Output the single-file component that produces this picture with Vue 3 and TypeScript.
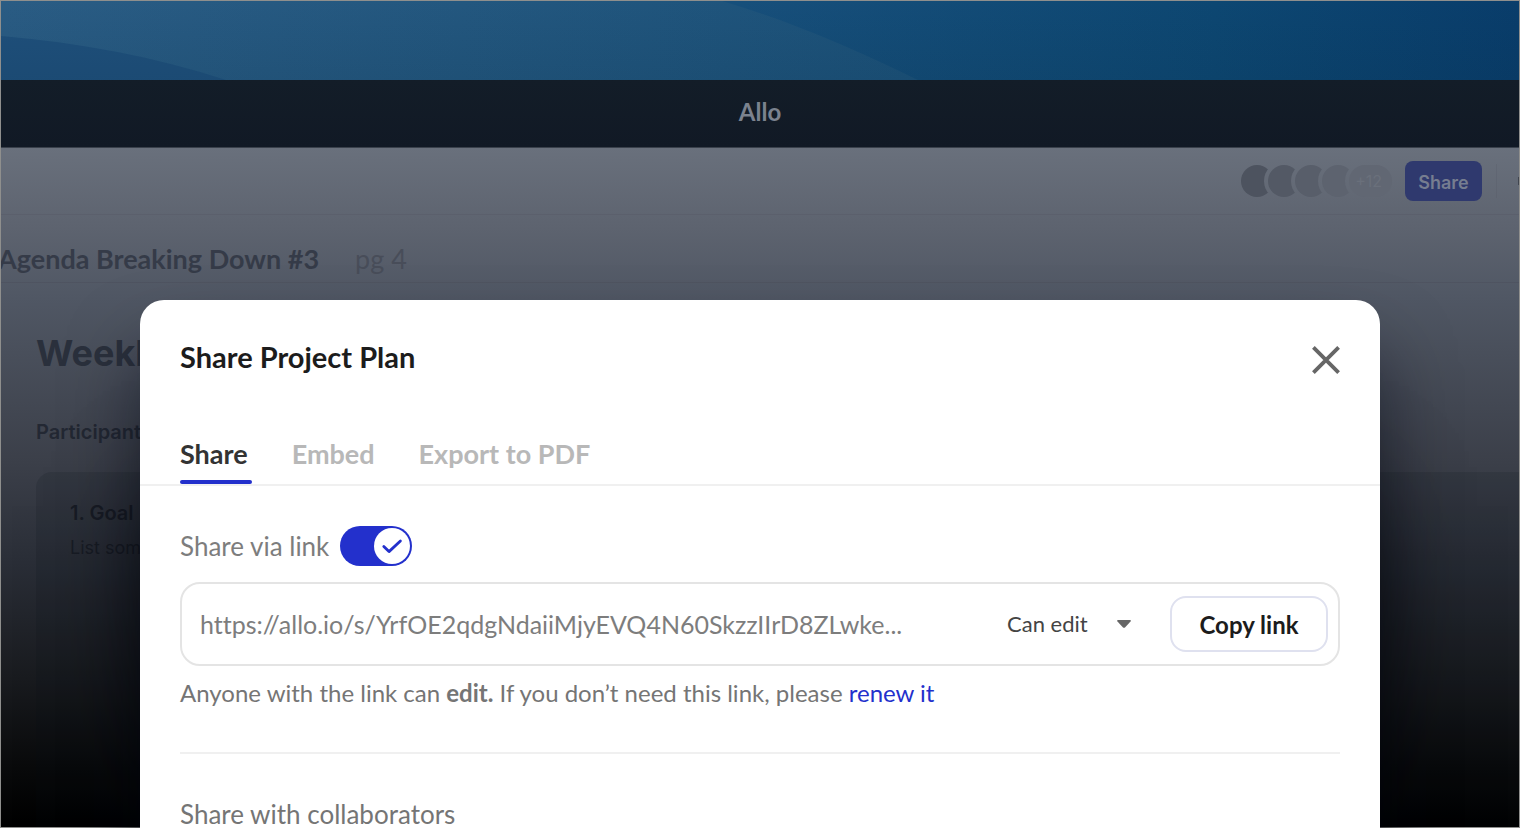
<script setup lang="ts">
import { ref } from 'vue'

const tabs: string[] = ['Share', 'Embed', 'Export to PDF']
const activeTab = ref<string>('Share')
const linkEnabled = ref<boolean>(true)
const permission = ref<string>('edit')
const link = ref<string>('https://allo.io/s/YrfOE2qdgNdaiiMjyEVQ4N60SkzzIIrD8ZLwke...')
const avatars: string[] = ['a1', 'a2', 'a3', 'a4']
</script>

<template>
  <div class="screen">
    <svg class="sky" viewBox="0 0 1520 79" preserveAspectRatio="none" aria-hidden="true">
      <defs>
        <linearGradient id="deep" x1="0" y1="0" x2="1" y2="0">
          <stop offset="0.45" stop-color="#18507c" />
          <stop offset="0.8" stop-color="#0d4772" />
          <stop offset="1" stop-color="#093d6b" />
        </linearGradient>
        <linearGradient id="wave" x1="0" y1="0" x2="1" y2="0">
          <stop offset="0" stop-color="#2a5c84" />
          <stop offset="1" stop-color="#1c527a" />
        </linearGradient>
        <linearGradient id="shade" x1="0" y1="0" x2="0" y2="1">
          <stop offset="0" stop-color="#06283f" stop-opacity="0" />
          <stop offset="1" stop-color="#06283f" stop-opacity="0.14" />
        </linearGradient>
      </defs>
      <rect width="1520" height="79" fill="url(#deep)" />
      <path d="M0 0H722C790 20 855 48 918 79H0Z" fill="url(#wave)" />
      <path d="M0 35C80 42 155 56 225 79H0Z" fill="#1f507c" />
      <rect width="1520" height="79" fill="url(#shade)" />
    </svg>

    <header class="titlebar">Allo</header>

    <div class="workspace">
      <div class="toolbar">
        <div class="avatars">
          <svg class="avatar-row" width="152" height="34" viewBox="0 0 152 34" aria-hidden="true">
            <defs>
              <mask id="bite">
                <rect width="34" height="34" fill="#fff" />
                <circle cx="43.5" cy="17" r="19.5" fill="#000" />
              </mask>
            </defs>
            <g v-for="(a, i) in avatars" :key="a" :transform="`translate(${i * 27} 0)`">
              <circle cx="17" cy="17" r="16" mask="url(#bite)" :class="a" />
            </g>
            <rect x="109" y="1" width="43" height="32" rx="16" class="a5" />
          </svg>
          <span class="more">+12</span>
        </div>
        <button type="button" class="share-button">Share</button>
        <span class="separator"></span>
        <span class="edge-dot"></span>
      </div>
      <div class="doc-bar">
        <span class="doc-title">Agenda Breaking Down #3</span>
        <span class="doc-page">pg 4</span>
      </div>
      <main class="document">
        <h1>Weekly</h1>
        <h2>Participants</h2>
        <section class="goal">
          <h3>1. Goal</h3>
          <p>List some</p>
        </section>
      </main>
    </div>

    <div class="modal" role="dialog" aria-labelledby="dialog-title">
      <div class="modal-head">
        <h2 id="dialog-title">Share Project Plan</h2>
        <button type="button" class="close" aria-label="Close">
          <svg width="28" height="28" viewBox="0 0 28 28">
            <path d="M1.4 1.4 26.6 26.6M26.6 1.4 1.4 26.6" fill="none" stroke="#666" stroke-width="3.8" />
          </svg>
        </button>
      </div>

      <nav class="tabs">
        <button
          v-for="tab in tabs"
          :key="tab"
          type="button"
          :class="['tab', { active: tab === activeTab }]"
          @click="activeTab = tab"
        >{{ tab }}</button>
      </nav>

      <div class="modal-body">
        <label class="toggle-row">
          <span>Share via link</span>
          <span class="switch">
            <input v-model="linkEnabled" type="checkbox" />
            <span class="knob">
              <svg width="36" height="36" viewBox="0 0 36 36">
                <path d="M9.8 18.4 15 23.6 26.4 13" fill="none" stroke="#2330cc" stroke-width="2.8" stroke-linecap="round" stroke-linejoin="round" />
              </svg>
            </span>
          </span>
        </label>

        <div class="link-box">
          <input v-model="link" class="link-input" type="text" readonly aria-label="Share link" />
          <div class="permission">
            <select v-model="permission" aria-label="Link permission">
              <option value="edit">Can edit</option>
            </select>
            <svg class="caret" width="14" height="8" viewBox="0 0 14 8">
              <path d="M0.6 0H13.4L14 1 8 7.4Q7 8.2 6 7.4L0 1Z" fill="#666" />
            </svg>
          </div>
          <button type="button" class="copy">Copy link</button>
        </div>

        <p class="hint">
          Anyone with the link can <strong>edit.</strong> If you don’t need this link, please <a href="#renew">renew it</a>
        </p>

        <h3 class="collab">Share with collaborators</h3>
      </div>
    </div>
  </div>
</template>

<style>
body {
  margin: 0;
  background: #000;
}
</style>

<style scoped>
* {
  box-sizing: border-box;
}

h1,
h2,
h3,
p {
  margin: 0;
}

button,
input,
select {
  margin: 0;
  padding: 0;
  border: 0;
  background: none;
  font: inherit;
  color: inherit;
  letter-spacing: inherit;
}

.screen {
  position: relative;
  display: flex;
  flex-direction: column;
  height: 100vh;
  padding: 1px;
  overflow: hidden;
  background: #8f8f8d;
  font-family: Lato, "Liberation Sans", sans-serif;
}

.sky {
  display: block;
  flex: none;
  width: 100%;
  height: 79px;
}

.titlebar {
  flex: none;
  height: 68px;
  border-bottom: 1px solid #3a414c;
  background: linear-gradient(#131d28, #111925);
  color: #7b828e;
  font: 700 24px/63px Lato, sans-serif;
  text-align: center;
}

.workspace {
  display: flex;
  flex: 1;
  flex-direction: column;
  min-height: 0;
  overflow: hidden;
  background: linear-gradient(
    #69707c 0,
    #5d636f 80px,
    #505764 150px,
    #3b3f49 315px,
    #2a2e37 415px,
    #191b1f 530px,
    #090a0b 620px,
    #000 680px
  );
  font-family: Inter, sans-serif;
}

.toolbar {
  display: flex;
  flex: none;
  align-items: center;
  justify-content: flex-end;
  height: 67px;
  border-bottom: 1px solid rgba(70, 66, 80, 0.14);
}

.avatars {
  position: relative;
  display: flex;
  margin-right: 13px;
}

.a1 {
  fill: #4d535f;
}

.a2 {
  fill: #535965;
}

.a3 {
  fill: #585e6a;
}

.a4 {
  fill: #5d636f;
}

.a5 {
  fill: #616773;
}

.more {
  position: absolute;
  right: 10px;
  top: 7px;
  color: #6a707b;
  font-size: 16px;
  line-height: 20px;
}

.share-button {
  width: 77px;
  height: 40px;
  padding-top: 2px;
  border-radius: 8px;
  background: #2f396e;
  color: #767d90;
  font-size: 18px;
  font-weight: 600;
}

.separator {
  width: 1px;
  height: 34px;
  margin-left: 14px;
  background: rgba(70, 70, 82, 0.14);
}

.edge-dot {
  width: 1px;
  height: 8px;
  margin-left: 21px;
  background: #40454f;
}

.doc-bar {
  display: flex;
  flex: none;
  align-items: center;
  gap: 36px;
  height: 68px;
  padding-top: 20px;
  border-bottom: 1px solid rgba(60, 54, 68, 0.16);
  font-family: Lato, sans-serif;
  font-size: 27px;
  line-height: 32px;
}

.doc-title {
  margin-left: -3px;
  color: #353b48;
  font-weight: 700;
}

.doc-page {
  color: #484d59;
}

.document {
  flex: 1;
  padding: 46px 0 0 35px;
}

.document h1 {
  color: #2a303c;
  font-size: 36px;
  font-weight: 700;
  line-height: 48px;
}

.document h2 {
  margin-top: 41px;
  color: #232833;
  font-size: 20px;
  font-weight: 600;
  line-height: 28px;
}

.goal {
  height: 100%;
  margin-top: 26px;
  padding: 27px 34px;
  border-radius: 16px 0 0 0;
  background: rgba(8, 12, 20, 0.13);
}

.goal h3 {
  color: #181c25;
  font-size: 20px;
  font-weight: 600;
  line-height: 28px;
}

.goal p {
  margin-top: 8px;
  color: #181c25;
  font-size: 18px;
  line-height: 26px;
}

.modal {
  position: absolute;
  top: 300px;
  right: 140px;
  left: 140px;
  min-height: 600px;
  border-radius: 24px;
  background: #fff;
  box-shadow: 0 170px 110px -36px #000004, 0 50px 80px -10px rgba(2, 6, 18, 0.7);
}

.modal-head {
  display: flex;
  align-items: center;
  justify-content: space-between;
  padding: 40px 40px 0;
}

.modal-head h2 {
  padding-bottom: 2px;
  color: #1c1c1c;
  font-size: 29px;
  font-weight: 700;
  line-height: 34px;
}

.close {
  display: flex;
  padding-top: 4px;
}

.tabs {
  display: flex;
  gap: 44px;
  margin-top: 60px;
  padding: 0 40px;
  border-bottom: 2px solid #f0f0f0;
}

.tab {
  height: 48px;
  padding-bottom: 8px;
  border-bottom: 4px solid transparent;
  color: #b8b8b8;
  font-size: 27px;
  font-weight: 700;
  line-height: 36px;
}

.tab.active {
  position: relative;
  color: #333;
}

.tab.active::after {
  position: absolute;
  right: -4px;
  bottom: -4px;
  left: 0;
  height: 4px;
  border-radius: 2px;
  background: #2330cc;
  content: "";
}

.modal-body {
  padding: 40px 40px 0;
}

.toggle-row {
  display: flex;
  align-items: center;
  gap: 11px;
  width: max-content;
  color: #7d7d7d;
  font-size: 26px;
  line-height: 40px;
}

.switch {
  position: relative;
  display: flex;
}

.switch input {
  width: 72px;
  height: 40px;
  border-radius: 20px;
  background: #b8b8b8;
  appearance: none;
}

.switch input:checked {
  background: #2330cc;
}

.knob {
  position: absolute;
  top: 2px;
  left: 2px;
  width: 36px;
  height: 36px;
  border-radius: 50%;
  background: #fff;
  pointer-events: none;
}

.switch input:checked + .knob {
  right: 2px;
  left: auto;
}

.knob svg {
  display: block;
}

.link-box {
  display: flex;
  align-items: center;
  height: 84px;
  margin-top: 16px;
  padding: 0 10px 0 18px;
  border: 2px solid #e4e4e4;
  border-radius: 20px;
}

.link-input {
  flex: 1;
  min-width: 0;
  height: 40px;
  color: #7d7d7d;
  font-size: 25px;
  font-variant-ligatures: none;
}

.permission {
  position: relative;
  display: flex;
  align-items: center;
  margin-right: 39px;
}

.permission select {
  width: 124px;
  height: 32px;
  color: #444;
  font-size: 22px;
  line-height: 32px;
  appearance: none;
}

.caret {
  position: absolute;
  right: 0;
  pointer-events: none;
}

.copy {
  width: 158px;
  height: 56px;
  border: 2px solid #dfe1ef;
  border-radius: 16px;
  color: #1c1c1c;
  font-size: 24px;
  font-weight: 700;
}

.hint {
  margin-top: 11px;
  padding-bottom: 43px;
  border-bottom: 2px solid #f0f0f0;
  color: #757575;
  font-size: 24px;
  line-height: 32px;
}

.hint a {
  color: #2330cc;
  text-decoration: none;
}

.collab {
  margin-top: 42px;
  color: #757575;
  font-size: 26px;
  font-weight: 400;
  line-height: 36px;
}
</style>
